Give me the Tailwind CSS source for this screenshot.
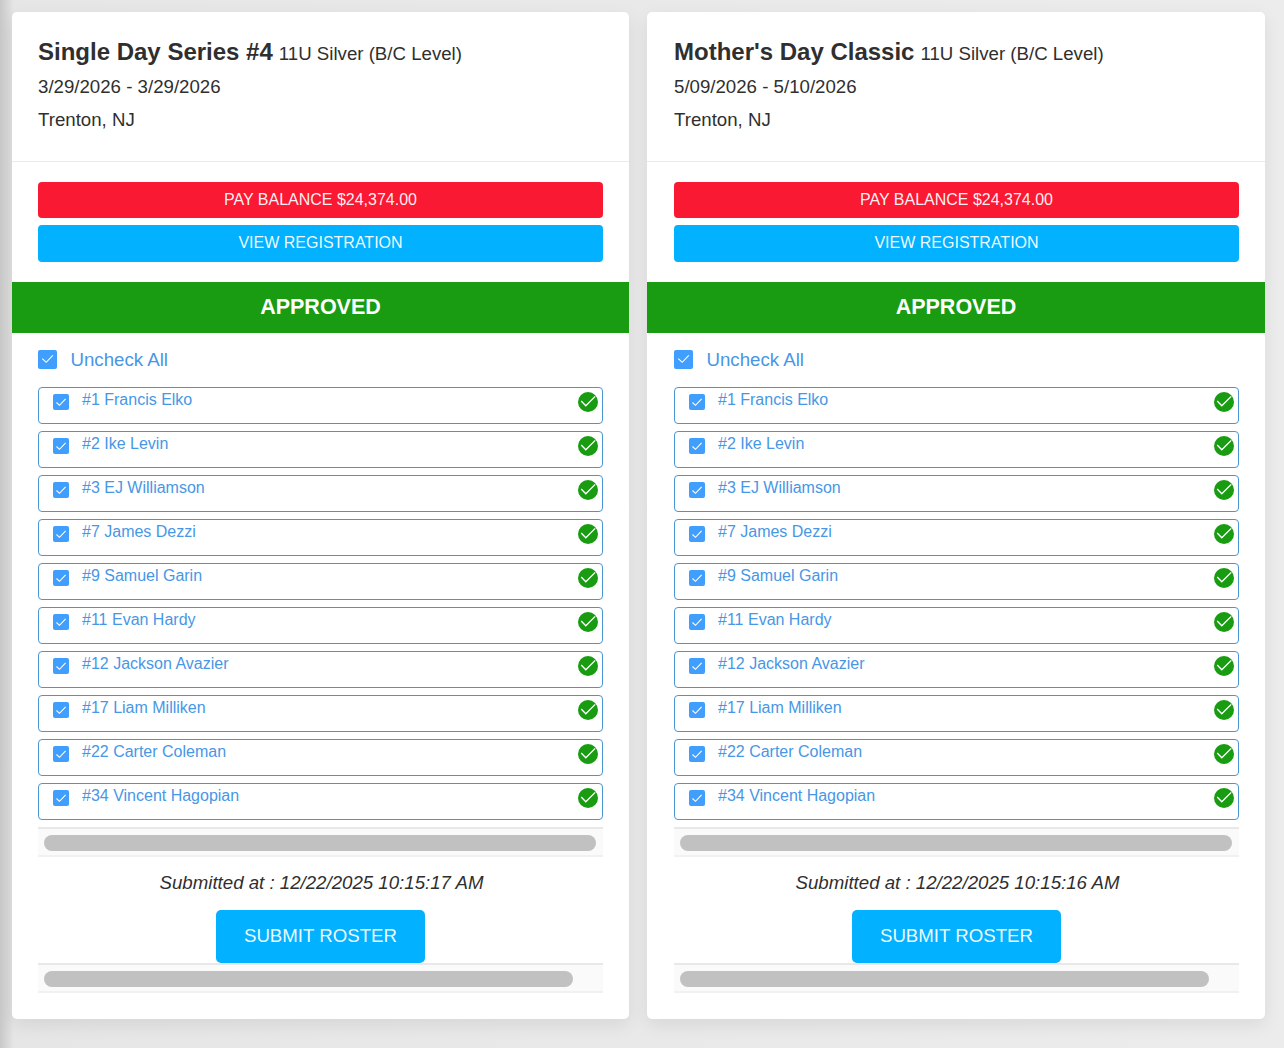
<!DOCTYPE html>
<html lang="en">

<head>
    <meta charset="UTF-8">
    <meta name="viewport" content="width=device-width, initial-scale=1.0">
    <title>Team Registrations</title>
    <script src="https://cdn.jsdelivr.net/npm/@tailwindcss/browser@4"></script>
</head>

<body class="h-[1048px] overflow-hidden bg-[#e8e8e8] bg-linear-to-r from-[#c8c8c8] via-[#e6e6e6] via-[14px] to-[#ececec] font-['Liberation_Sans',Arial,sans-serif] text-[18.67px] text-[#2f2f2f] antialiased">
    <div id="events" class="grid grid-cols-[617px_618px] items-start gap-[18px] pt-3 pl-3"></div>

    <script>
        const players = [
            '#1 Francis Elko',
            '#2 Ike Levin',
            '#3 EJ Williamson',
            '#7 James Dezzi',
            '#9 Samuel Garin',
            '#11 Evan Hardy',
            '#12 Jackson Avazier',
            '#17 Liam Milliken',
            '#22 Carter Coleman',
            '#34 Vincent Hagopian',
        ];

        const events = [
            { name: 'Single Day Series #4', dates: '3/29/2026 - 3/29/2026', submitted: '12/22/2025 10:15:17 AM' },
            { name: "Mother's Day Classic", dates: '5/09/2026 - 5/10/2026', submitted: '12/22/2025 10:15:16 AM' },
        ];

        const row = (player) => `
            <li class="flex h-[37px] items-start rounded-[4px] border border-[#4a96d2] pr-1 pl-[14px]">
                <svg class="mt-[6px] size-4 shrink-0 rounded-[2px] bg-[#409eff]" viewBox="0 0 16 16" fill="none" stroke="#fff" stroke-width="1.1">
                    <path d="M3.5 8.5 6.5 11.3 12.6 4.8" />
                </svg>
                <span class="ml-[13px] text-base leading-6 text-[#4797e6]">${player}</span>
                <svg class="mt-1 ml-auto size-5 shrink-0" viewBox="0 0 20 20" fill="none">
                    <circle cx="10" cy="10" r="10" fill="#199b12" />
                    <path d="M3.2 9 7.8 13.8 17.2 4.4" stroke="#fff" stroke-width="1.3" />
                </svg>
            </li>`;

        const card = (event) => `
            <section class="h-[1007px] rounded-[5px] bg-white shadow-[0_6px_18px_rgba(0,0,0,0.08)]">
                <!-- Event details -->
                <header class="h-[150px] border-b border-[#ebebeb]">
                    <div class="mr-[26px] ml-auto w-[565px] pt-[23px] leading-[33px]">
                        <div class="flex h-[35px] items-baseline gap-[6px]">
                            <h2 class="text-2xl leading-[33px] font-bold">${event.name}</h2>
                            <span>11U Silver (B/C Level)</span>
                        </div>
                        <p>${event.dates}</p>
                        <p>Trenton, NJ</p>
                    </div>
                </header>

                <!-- Actions -->
                <div class="mr-[26px] ml-auto flex w-[565px] flex-col gap-[7px] py-5">
                    <button class="h-9 rounded-[4px] bg-[#fa1932] text-base text-white/95">PAY BALANCE $24,374.00</button>
                    <button class="h-[37px] rounded-[4px] bg-[#02b1ff] pb-[2px] text-base text-white/95">VIEW REGISTRATION</button>
                </div>
                <div class="flex h-[51px] items-center justify-center bg-[#199b12] text-[21.5px] font-bold text-white">APPROVED</div>

                <!-- Roster -->
                <div class="mr-[26px] ml-auto w-[565px]">
                    <div class="flex h-[54px] items-center gap-[13.5px] text-[#4797e6]">
                        <svg class="mb-[2px] size-[19px] rounded-[2px] bg-[#409eff]" viewBox="0 0 19 19" fill="none" stroke="#fff" stroke-width="1.1">
                            <path d="M4.3 8.6 8.2 12.3 14.8 5.3" />
                        </svg>
                        <span>Uncheck All</span>
                    </div>
                    <ul class="flex flex-col gap-[7px]">${players.map(row).join('')}</ul>
                    <div class="mt-[7px] h-[30px] border-t-2 border-b-2 border-t-[#e8e8e8] border-b-[#f1f1f1] bg-[#fafafa] px-[6px] pt-[6px]">
                        <div class="h-4 w-[552px] rounded-full bg-[#c1c1c1]"></div>
                    </div>

                    <!-- Submit -->
                    <p class="h-[53px] pl-[2px] text-center leading-[51px] italic">Submitted at : ${event.submitted}</p>
                    <div class="flex justify-center">
                        <button class="h-[53px] w-[209px] rounded-[5px] bg-[#02b1ff] pb-[2px] text-white/95">SUBMIT ROSTER</button>
                    </div>
                    <div class="h-[30px] border-t-2 border-b-2 border-t-[#e8e8e8] border-b-[#f1f1f1] bg-[#fafafa] px-[6px] pt-[6px]">
                        <div class="h-4 w-[529px] rounded-full bg-[#c1c1c1]"></div>
                    </div>
                </div>
            </section>`;

        document.getElementById('events').innerHTML = events.map(card).join('');
    </script>
</body>

</html>
